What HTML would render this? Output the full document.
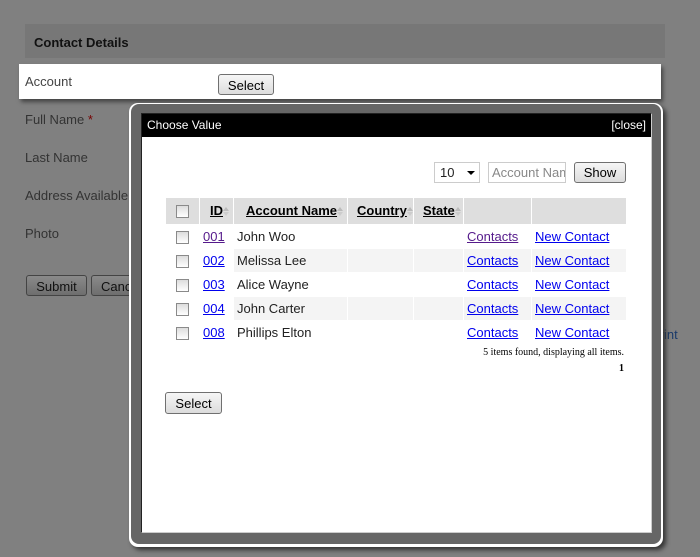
<!DOCTYPE html>
<html><head><style>
*{margin:0;padding:0;box-sizing:border-box}
body{width:700px;height:557px;background:#808080;font-family:"Liberation Sans",Arial,sans-serif;font-size:13px;position:relative;overflow:hidden;color:#222}
.abs{position:absolute}
.lbl{position:absolute;left:25px;color:#333;font-size:13px}
.btn{position:absolute;border:1px solid #707070;border-radius:3px;background:linear-gradient(#f6f6f6,#dcdcdc);font-size:13px;text-align:center;color:#000}
.dbtn{border-color:#444;background:linear-gradient(#8a8a8a,#6e6e6e);color:#111}
table{border-collapse:separate;border-spacing:1px;table-layout:fixed}
td,th{height:23px;line-height:23px;font-size:13px;padding:0 3px;text-align:left;white-space:nowrap;overflow:hidden}
th{background:#dedede;font-weight:bold;height:24px;line-height:26px}
th u{color:#000}
a{color:#00e;text-decoration:underline}
.cb{display:inline-block;width:13px;height:13px;border:1px solid #8a8a8a;background:linear-gradient(#ddd,#fff);vertical-align:middle}
tr.alt td{background:#f4f4f4}
.ar{display:inline-block;width:6px;height:9px;position:relative;vertical-align:middle;margin-left:0}
.ar:before{content:"";position:absolute;left:0;top:0;border-left:3px solid transparent;border-right:3px solid transparent;border-bottom:4px solid #bbb}
.ar:after{content:"";position:absolute;left:0;top:5px;border-left:3px solid transparent;border-right:3px solid transparent;border-top:4px solid #ccc}
</style></head><body>
<div class="abs" style="left:25px;top:24px;width:640px;height:34px;background:#777;font-weight:bold;color:#111;padding:11px 9px;font-size:13px">Contact Details</div>
<div class="abs" style="left:19px;top:64px;width:642px;height:35px;background:#fff;box-shadow:2px 3px 4px #444"></div>
<div class="lbl" style="top:74px;color:#444">Account</div>
<div class="btn" style="left:218px;top:74px;width:56px;height:21px;padding-top:3px">Select</div>
<div class="lbl" style="top:112px">Full Name <span style="color:#700">*</span></div>
<div class="lbl" style="top:150px">Last Name</div>
<div class="lbl" style="top:188px">Address Available</div>
<div class="lbl" style="top:226px">Photo</div>
<div class="abs" style="left:217px;top:111px;width:162px;height:3px;border-top:1px solid #555"></div>
<div class="btn dbtn" style="left:26px;top:275px;width:61px;height:21px;padding-top:3px">Submit</div>
<div class="btn dbtn" style="left:91px;top:275px;width:60px;height:21px;padding-top:3px;text-align:left;padding-left:9px">Cancel</div>
<div class="abs" style="left:651px;top:327px;color:#1a3a6a">Print</div>

<div class="abs" style="left:129px;top:103px;width:534px;height:444px;background:#fff;border-radius:9px;box-shadow:3px 3px 5px #333"></div>
<div class="abs" style="left:131px;top:104px;width:530px;height:440px;background:#666;border-radius:8px"></div>
<div class="abs" style="left:141px;top:113px;width:511px;height:420px;background:#fff;border:1px solid #222;border-right-color:#ccc;border-bottom-color:#ccc"></div>
<div class="abs" style="left:142px;top:114px;width:509px;height:23px;background:#000;color:#fff;font-size:12px;padding:4px 5px">Choose Value<span style="float:right">[close]</span></div>

<div class="abs" style="left:434px;top:162px;width:46px;height:21px;border:1px solid #ccc;padding:2px 5px;font-size:13px">10<span style="position:absolute;left:32px;top:8px;border-left:4px solid transparent;border-right:4px solid transparent;border-top:4px solid #000"></span></div>
<div class="abs" style="left:488px;top:162px;width:78px;height:21px;border:1px solid #ccc;padding:2px 3px;color:#888;font-size:13px;overflow:hidden;white-space:nowrap">Account Nam</div>
<div class="btn" style="left:574px;top:162px;width:52px;height:21px;padding-top:2px">Show</div>

<table class="abs" style="left:165px;top:197px;width:462px">
<colgroup><col style="width:33px"><col style="width:33px"><col style="width:113px"><col style="width:65px"><col style="width:49px"><col style="width:67px"><col></colgroup>
<tr><th style="text-align:center"><span class="cb"></span></th><th style="padding-left:10px"><u>ID</u><span class="ar"></span></th><th style="padding-left:12px"><u>Account Name</u><span class="ar"></span></th><th style="padding-left:9px"><u>Country</u><span class="ar"></span></th><th style="padding-left:9px"><u>State</u><span class="ar"></span></th><th></th><th></th></tr>
<tr><td style="text-align:center"><span class="cb"></span></td><td><a style="color:#551a8b">001</a></td><td>John Woo</td><td></td><td></td><td><a style="color:#551a8b">Contacts</a></td><td><a>New Contact</a></td></tr>
<tr class="alt"><td style="text-align:center;background:#fff"><span class="cb"></span></td><td style="background:#fff"><a>002</a></td><td>Melissa Lee</td><td></td><td></td><td><a>Contacts</a></td><td><a>New Contact</a></td></tr>
<tr><td style="text-align:center"><span class="cb"></span></td><td><a>003</a></td><td>Alice Wayne</td><td></td><td></td><td><a>Contacts</a></td><td><a>New Contact</a></td></tr>
<tr class="alt"><td style="text-align:center;background:#fff"><span class="cb"></span></td><td style="background:#fff"><a>004</a></td><td>John Carter</td><td></td><td></td><td><a>Contacts</a></td><td><a>New Contact</a></td></tr>
<tr><td style="text-align:center"><span class="cb"></span></td><td><a>008</a></td><td>Phillips Elton</td><td></td><td></td><td><a>Contacts</a></td><td><a>New Contact</a></td></tr>
</table>
<div class="abs" style="left:400px;top:347px;width:224px;text-align:right;font-family:'Liberation Serif',serif;font-size:10px;color:#000">5 items found, displaying all items.</div>
<div class="abs" style="left:400px;top:363px;width:224px;text-align:right;font-family:'Liberation Serif',serif;font-size:10px;font-weight:bold;color:#000">1</div>
<div class="btn" style="left:165px;top:392px;width:57px;height:22px;padding-top:3px">Select</div>
</body></html>
